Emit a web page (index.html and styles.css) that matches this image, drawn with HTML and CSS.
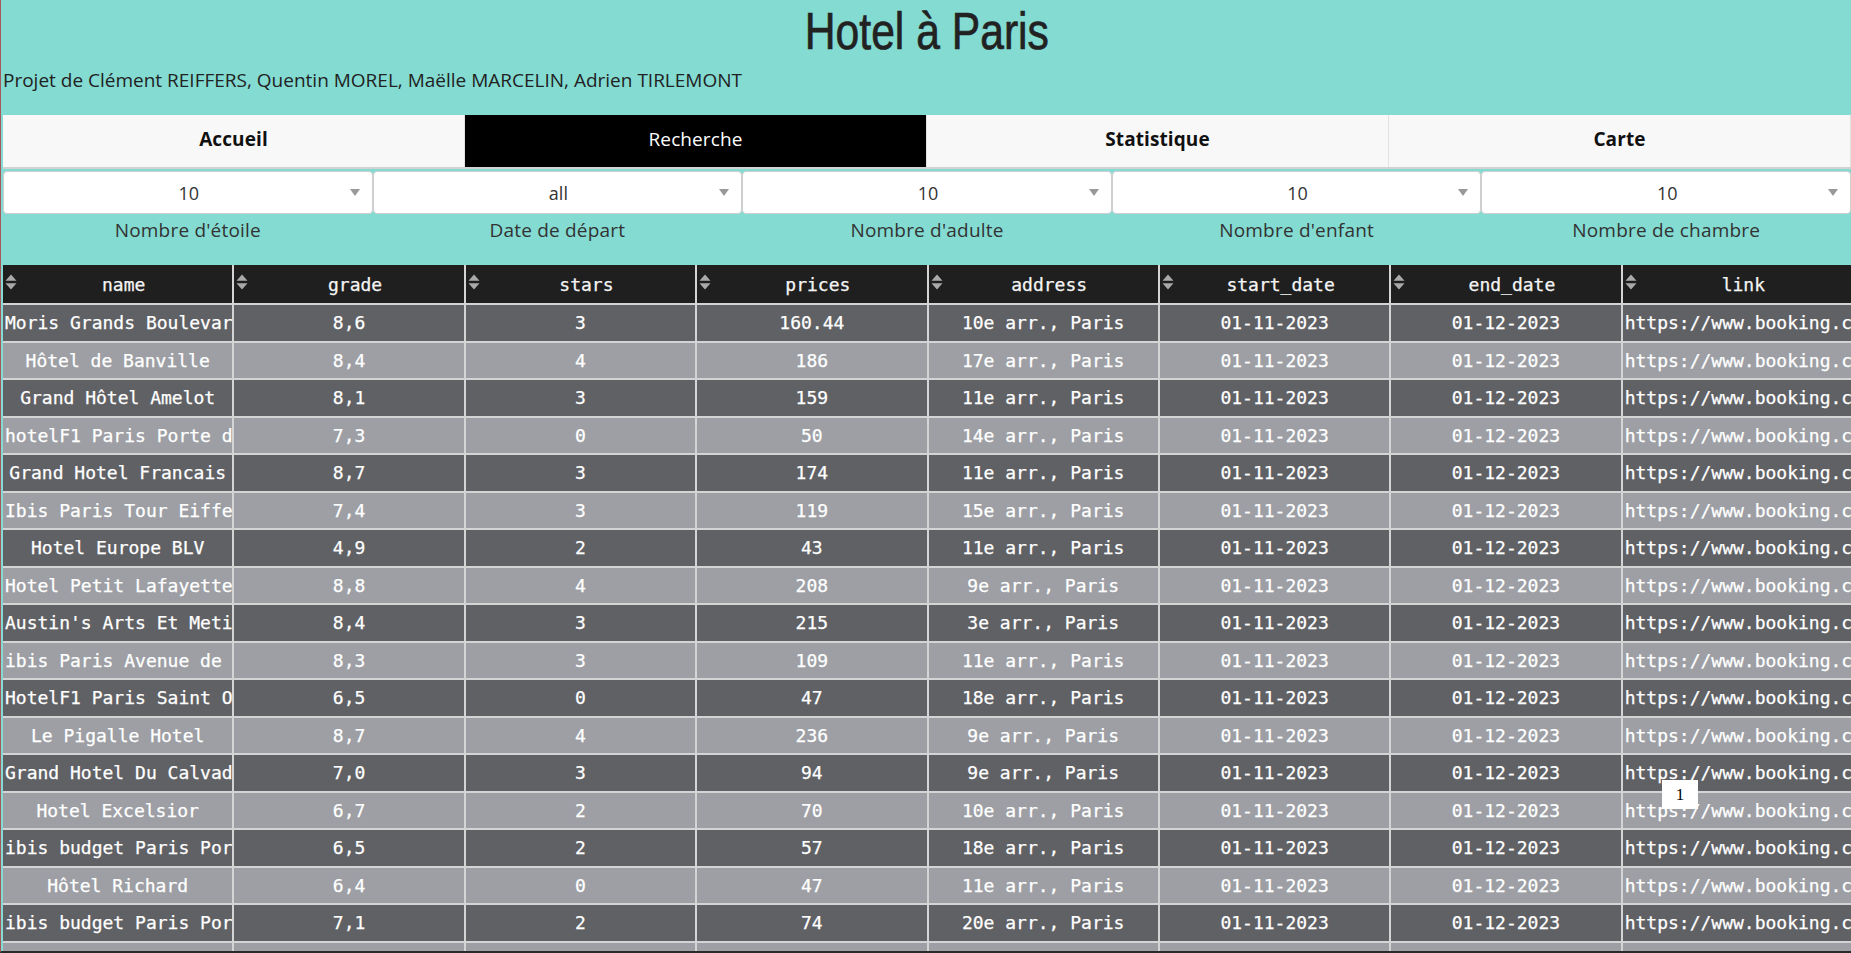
FILE: index.html
```html
<!DOCTYPE html>
<html lang="fr">
<head>
<meta charset="utf-8">
<title>Hotel à Paris</title>
<link rel="stylesheet" href="styles.css">
</head>
<body>
<div class="page">
  <header class="hero">
    <h1 class="title"><span class="title-text">Hotel à Paris</span></h1>
    <p class="subtitle">Projet de Clément REIFFERS, Quentin MOREL, Maëlle MARCELIN, Adrien TIRLEMONT</p>
  </header>

  <nav class="tabs">
    <a class="tab">Accueil</a>
    <a class="tab tab-active">Recherche</a>
    <a class="tab">Statistique</a>
    <a class="tab">Carte</a>
  </nav>

  <section class="filters">
    <div class="filter">
      <div class="select"><span class="select-value">10</span><span class="select-arrow"></span></div>
      <div class="filter-label">Nombre d'étoile</div>
    </div>
    <div class="filter">
      <div class="select"><span class="select-value">all</span><span class="select-arrow"></span></div>
      <div class="filter-label">Date de départ</div>
    </div>
    <div class="filter">
      <div class="select"><span class="select-value">10</span><span class="select-arrow"></span></div>
      <div class="filter-label">Nombre d'adulte</div>
    </div>
    <div class="filter">
      <div class="select"><span class="select-value">10</span><span class="select-arrow"></span></div>
      <div class="filter-label">Nombre d'enfant</div>
    </div>
    <div class="filter">
      <div class="select"><span class="select-value">10</span><span class="select-arrow"></span></div>
      <div class="filter-label">Nombre de chambre</div>
    </div>
  </section>

  <div class="table-wrap">
    <table class="grid">
      <thead>
        <tr>
          <th><div class="th-inner"><svg class="sort" width="12" height="18" viewBox="0 0 12 18"><path d="M6 1.5 L11.5 7.8 H0.5 Z M6 16.5 L11.5 10.2 H0.5 Z" fill="#a9a9a9"/></svg><span class="th-text">name</span></div></th>
          <th><div class="th-inner"><svg class="sort" width="12" height="18" viewBox="0 0 12 18"><path d="M6 1.5 L11.5 7.8 H0.5 Z M6 16.5 L11.5 10.2 H0.5 Z" fill="#a9a9a9"/></svg><span class="th-text">grade</span></div></th>
          <th><div class="th-inner"><svg class="sort" width="12" height="18" viewBox="0 0 12 18"><path d="M6 1.5 L11.5 7.8 H0.5 Z M6 16.5 L11.5 10.2 H0.5 Z" fill="#a9a9a9"/></svg><span class="th-text">stars</span></div></th>
          <th><div class="th-inner"><svg class="sort" width="12" height="18" viewBox="0 0 12 18"><path d="M6 1.5 L11.5 7.8 H0.5 Z M6 16.5 L11.5 10.2 H0.5 Z" fill="#a9a9a9"/></svg><span class="th-text">prices</span></div></th>
          <th><div class="th-inner"><svg class="sort" width="12" height="18" viewBox="0 0 12 18"><path d="M6 1.5 L11.5 7.8 H0.5 Z M6 16.5 L11.5 10.2 H0.5 Z" fill="#a9a9a9"/></svg><span class="th-text">address</span></div></th>
          <th><div class="th-inner"><svg class="sort" width="12" height="18" viewBox="0 0 12 18"><path d="M6 1.5 L11.5 7.8 H0.5 Z M6 16.5 L11.5 10.2 H0.5 Z" fill="#a9a9a9"/></svg><span class="th-text">start_date</span></div></th>
          <th><div class="th-inner"><svg class="sort" width="12" height="18" viewBox="0 0 12 18"><path d="M6 1.5 L11.5 7.8 H0.5 Z M6 16.5 L11.5 10.2 H0.5 Z" fill="#a9a9a9"/></svg><span class="th-text">end_date</span></div></th>
          <th><div class="th-inner"><svg class="sort" width="12" height="18" viewBox="0 0 12 18"><path d="M6 1.5 L11.5 7.8 H0.5 Z M6 16.5 L11.5 10.2 H0.5 Z" fill="#a9a9a9"/></svg><span class="th-text">link</span></div></th>
        </tr>
      </thead>
      <tbody>
        <tr><td>Moris Grands Boulevards</td><td>8,6</td><td>3</td><td>160.44</td><td>10e arr., Paris</td><td>01-11-2023</td><td>01-12-2023</td><td>https://www.booking.com/hotel/fr/moris.fr.html</td></tr>
        <tr><td>Hôtel de Banville</td><td>8,4</td><td>4</td><td>186</td><td>17e arr., Paris</td><td>01-11-2023</td><td>01-12-2023</td><td>https://www.booking.com/hotel/fr/banville.fr.html</td></tr>
        <tr><td>Grand Hôtel Amelot</td><td>8,1</td><td>3</td><td>159</td><td>11e arr., Paris</td><td>01-11-2023</td><td>01-12-2023</td><td>https://www.booking.com/hotel/fr/amelot.fr.html</td></tr>
        <tr><td>hotelF1 Paris Porte de Châtillon</td><td>7,3</td><td>0</td><td>50</td><td>14e arr., Paris</td><td>01-11-2023</td><td>01-12-2023</td><td>https://www.booking.com/hotel/fr/hotelf1.fr.html</td></tr>
        <tr><td>Grand Hotel Francais</td><td>8,7</td><td>3</td><td>174</td><td>11e arr., Paris</td><td>01-11-2023</td><td>01-12-2023</td><td>https://www.booking.com/hotel/fr/francais.fr.html</td></tr>
        <tr><td>Ibis Paris Tour Eiffel Cambronne</td><td>7,4</td><td>3</td><td>119</td><td>15e arr., Paris</td><td>01-11-2023</td><td>01-12-2023</td><td>https://www.booking.com/hotel/fr/ibis.fr.html</td></tr>
        <tr><td>Hotel Europe BLV</td><td>4,9</td><td>2</td><td>43</td><td>11e arr., Paris</td><td>01-11-2023</td><td>01-12-2023</td><td>https://www.booking.com/hotel/fr/europe.fr.html</td></tr>
        <tr><td>Hotel Petit Lafayette</td><td>8,8</td><td>4</td><td>208</td><td>9e arr., Paris</td><td>01-11-2023</td><td>01-12-2023</td><td>https://www.booking.com/hotel/fr/lafayette.fr.html</td></tr>
        <tr><td>Austin's Arts Et Metiers</td><td>8,4</td><td>3</td><td>215</td><td>3e arr., Paris</td><td>01-11-2023</td><td>01-12-2023</td><td>https://www.booking.com/hotel/fr/austins.fr.html</td></tr>
        <tr><td>ibis Paris Avenue de la République</td><td>8,3</td><td>3</td><td>109</td><td>11e arr., Paris</td><td>01-11-2023</td><td>01-12-2023</td><td>https://www.booking.com/hotel/fr/ibis-avenue.fr.html</td></tr>
        <tr><td>HotelF1 Paris Saint Ouen</td><td>6,5</td><td>0</td><td>47</td><td>18e arr., Paris</td><td>01-11-2023</td><td>01-12-2023</td><td>https://www.booking.com/hotel/fr/f1-saint-ouen.fr.html</td></tr>
        <tr><td>Le Pigalle Hotel</td><td>8,7</td><td>4</td><td>236</td><td>9e arr., Paris</td><td>01-11-2023</td><td>01-12-2023</td><td>https://www.booking.com/hotel/fr/pigalle.fr.html</td></tr>
        <tr><td>Grand Hotel Du Calvados</td><td>7,0</td><td>3</td><td>94</td><td>9e arr., Paris</td><td>01-11-2023</td><td>01-12-2023</td><td>https://www.booking.com/hotel/fr/calvados.fr.html</td></tr>
        <tr><td>Hotel Excelsior</td><td>6,7</td><td>2</td><td>70</td><td>10e arr., Paris</td><td>01-11-2023</td><td>01-12-2023</td><td>https://www.booking.com/hotel/fr/excelsior.fr.html</td></tr>
        <tr><td>ibis budget Paris Porte de Montmartre</td><td>6,5</td><td>2</td><td>57</td><td>18e arr., Paris</td><td>01-11-2023</td><td>01-12-2023</td><td>https://www.booking.com/hotel/fr/budget-montmartre.fr.html</td></tr>
        <tr><td>Hôtel Richard</td><td>6,4</td><td>0</td><td>47</td><td>11e arr., Paris</td><td>01-11-2023</td><td>01-12-2023</td><td>https://www.booking.com/hotel/fr/richard.fr.html</td></tr>
        <tr><td>ibis budget Paris Porte de Vincennes</td><td>7,1</td><td>2</td><td>74</td><td>20e arr., Paris</td><td>01-11-2023</td><td>01-12-2023</td><td>https://www.booking.com/hotel/fr/budget-vincennes.fr.html</td></tr>
        <tr><td>Hôtel Eiffel Segur</td><td>8,2</td><td>3</td><td>142</td><td>15e arr., Paris</td><td>01-11-2023</td><td>01-12-2023</td><td>https://www.booking.com/hotel/fr/segur.fr.html</td></tr>
      </tbody>
    </table>
  </div>

  <div class="tooltip">1</div>
</div>
</body>
</html>
```
FILE: styles.css
```css
html, body {
  margin: 0;
  padding: 0;
}

body {
  background: #83dbd2;
  overflow: hidden;
  height: 953px;
  border-left: 1px solid #a5575c;
  border-bottom: 2px solid #2a2a2a;
  box-sizing: border-box;
  font-family: "Open Sans", "Noto Sans", sans-serif;
  color: #222;
}

.page {
  position: relative;
  padding-left: 2px;
}

.hero {
  display: flex;
  flex-direction: column;
}

.title {
  margin: 0;
  text-align: center;
  font-family: "Liberation Sans", "Arimo", sans-serif;
  font-weight: normal;
  font-size: 52px;
  line-height: 62px;
  color: #222;
}

.title-text {
  display: inline-block;
  transform: scaleX(0.82);
  -webkit-text-stroke: 0.7px #222;
}

.subtitle {
  margin: 4px 0 0 0;
  font-size: 19px;
  line-height: 28px;
  color: #222;
}

.tabs {
  display: grid;
  grid-template-columns: repeat(4, 1fr);
  margin-top: 21px;
  height: 54px;
  background: #f8f8f8;
  border-bottom: 2px solid #d2d2d2;
  box-sizing: border-box;
}

.tab {
  display: flex;
  align-items: center;
  justify-content: center;
  font-weight: bold;
  font-size: 19px;
  color: #111;
  letter-spacing: 0.1px;
  border-right: 1px solid #e2e2e2;
  padding-bottom: 4px;
}

.tab-active {
  background: #000;
  color: #fff;
  font-weight: normal;
}

.filters {
  display: grid;
  grid-template-columns: repeat(5, 1fr);
  margin-top: 2px;
  height: 94px;
}

.filter {
  display: flex;
  flex-direction: column;
}

.select {
  display: flex;
  align-items: center;
  height: 43px;
  box-sizing: border-box;
  background: #fff;
  border: 1px solid #cfcfcf;
  border-radius: 4px;
  padding: 0 12px 0 24px;
}

.select-value {
  flex: 1;
  text-align: center;
  font-size: 18px;
  color: #333;
}

.select-arrow {
  width: 0;
  height: 0;
  border-left: 5.5px solid transparent;
  border-right: 5.5px solid transparent;
  border-top: 7px solid #999;
}

.filter-label {
  text-align: center;
  font-size: 19px;
  line-height: 26px;
  margin-top: 3px;
  color: #333;
  letter-spacing: 0.2px;
}

.grid {
  table-layout: fixed;
  width: 1851px;
  border-collapse: separate;
  border-spacing: 0;
  font-family: "DejaVu Sans Mono", "Liberation Mono", monospace;
  font-size: 18px;
  color: #fff;
  -webkit-text-stroke: 0.25px #fff;
}

.grid th {
  background: #1f1f1f;
  height: 38px;
  padding: 0 2px;
  font-weight: normal;
  border-right: 2px solid #d4d4d4;
  border-bottom: 2px solid #d4d4d4;
  color: #f2f2f2;
}

.th-inner {
  display: flex;
  align-items: center;
}

.sort {
  flex: none;
  margin-right: 0;
  margin-top: -5px;
}

.th-text {
  flex: 1;
  text-align: center;
}

.grid td {
  height: 35.5px;
  padding: 0 2px;
  text-align: center;
  white-space: nowrap;
  overflow: hidden;
  border-right: 2px solid #d4d4d4;
  border-bottom: 2px solid #d4d4d4;
}

.grid tbody tr:nth-child(odd) td {
  background: #606165;
}

.grid tbody tr:nth-child(even) td {
  background: #9d9fa5;
}

.tooltip {
  position: absolute;
  left: 1661px;
  top: 780px;
  width: 36px;
  height: 29px;
  background: #fff;
  display: flex;
  align-items: center;
  justify-content: center;
  font-family: "Liberation Serif", serif;
  font-size: 17px;
  color: #000;
  -webkit-text-stroke: 0;
}
```
